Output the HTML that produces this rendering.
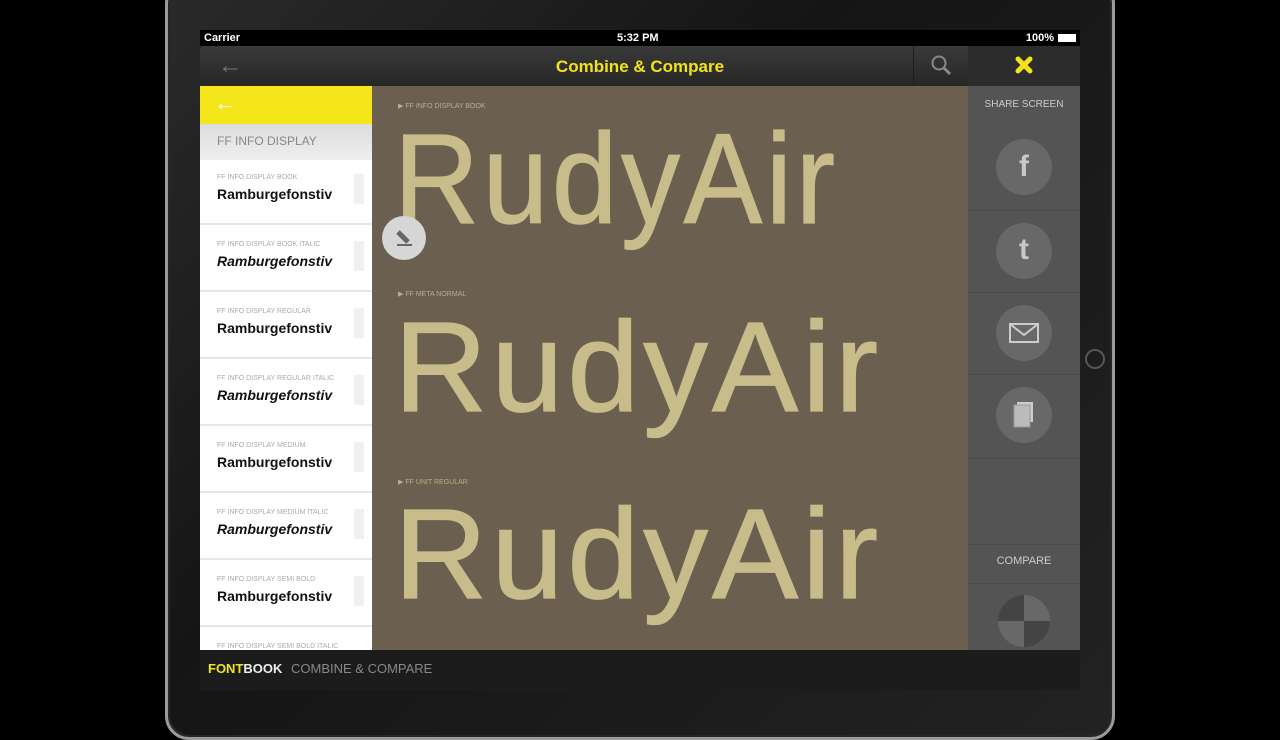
<!DOCTYPE html>
<html><head><meta charset="utf-8"><style>
*{margin:0;padding:0;box-sizing:border-box}
body{width:1280px;height:720px;background:#000;position:relative;overflow:hidden;font-family:"Liberation Sans",sans-serif}
.bezel{position:absolute;left:165px;top:-20px;width:950px;height:760px;background:#262626;border:3px solid #9a9a9a;border-radius:24px}
.inner{position:absolute;left:170px;top:-15px;width:940px;height:750px;background:linear-gradient(135deg,#2a2a2a,#151515 40%,#222);border-radius:20px}
.status{position:absolute;left:200px;top:30px;width:880px;height:16px;background:#000;color:#fff;font-size:11px;font-weight:bold}
.nav{position:absolute;left:200px;top:46px;width:880px;height:40px;background:linear-gradient(#3a3a3a,#262626);border-radius:4px 4px 0 0}
.left{position:absolute;left:200px;top:86px;width:172px;height:564px;background:#fff;overflow:hidden}
.main{position:absolute;left:372px;top:86px;width:596px;height:564px;background:#6b604f;overflow:hidden}
.right{position:absolute;left:968px;top:86px;width:112px;height:564px;background:#545454}
.bottom{position:absolute;left:200px;top:650px;width:880px;height:40px;background:#1c1c1c}
.item{position:absolute;left:0;width:172px;height:65px;border-bottom:2px solid #e6e6e6;background:#fff}
.item .s{position:absolute;left:17px;top:14px;font-size:7px;color:#aaa}
.item .b{position:absolute;left:17px;top:26px;font-size:14px;font-weight:bold;color:#111}
.item .g{position:absolute;right:8px;top:14px;width:10px;height:30px;background:#f0f0f0}
.big{position:absolute;left:22px;color:#c9bc8b;font-size:128px;line-height:1;transform-origin:0 0;-webkit-text-stroke:1.2px #c9bc8b;letter-spacing:4px}
.lab{position:absolute;left:26px;font-size:7px;color:#b8ad8a}
.circ{position:absolute;left:28px;width:56px;height:56px;border-radius:50%;background:#686868;color:#c8c8c8;text-align:center;font-weight:bold}
.sep{position:absolute;left:0;width:112px;height:1px;background:#4a4a4a}
</style></head><body>
<div class="bezel"></div><div class="inner"></div>
<div style="position:absolute;left:1085px;top:349px;width:20px;height:20px;border-radius:50%;border:2px solid #555"></div>
<div class="status"><span style="position:absolute;left:4px;top:2px">Carrier</span><span style="position:absolute;left:417px;top:2px">5:32 PM</span><span style="position:absolute;right:26px;top:2px">100%</span><span style="position:absolute;right:4px;top:4px;width:18px;height:8px;background:#fff"></span></div>
<div class="nav">
<div style="position:absolute;left:18px;top:6px;color:#777;font-size:24px">←</div>
<div style="position:absolute;left:0;width:880px;text-align:center;top:11px;color:#f2e31b;font-size:17px;font-weight:bold">Combine &amp; Compare</div>
<div style="position:absolute;left:713px;top:0;width:1px;height:40px;background:#1e1e1e"></div>
<svg style="position:absolute;left:730px;top:8px" width="22" height="22"><circle cx="9" cy="9" r="6.5" fill="none" stroke="#888" stroke-width="2"/><line x1="14" y1="14" x2="20" y2="20" stroke="#888" stroke-width="3"/></svg>
<div style="position:absolute;left:768px;top:0;width:112px;height:40px;background:#2c2c2c"></div>
<svg style="position:absolute;left:815px;top:10px" width="18" height="18"><path d="M3 3L15 15M15 3L3 15" stroke="#f2e31b" stroke-width="5" stroke-linecap="round"/></svg>
</div>
<div class="left">
<div style="position:absolute;left:0;top:0;width:172px;height:38px;background:#f5e61c"><span style="position:absolute;left:14px;top:4px;color:#fff;font-size:22px">←</span></div>
<div style="position:absolute;left:0;top:38px;width:172px;height:36px;background:linear-gradient(#ddd,#eee);"><span style="position:absolute;left:17px;top:10px;font-size:12px;color:#888">FF INFO DISPLAY</span></div>
<div class="item" style="top:74px"><div class="s">FF INFO DISPLAY BOOK</div><div class="b">Ramburgefonstiv</div><div class="g"></div></div>
<div class="item" style="top:141px"><div class="s">FF INFO DISPLAY BOOK ITALIC</div><div class="b" style="font-style:italic">Ramburgefonstiv</div><div class="g"></div></div>
<div class="item" style="top:208px"><div class="s">FF INFO DISPLAY REGULAR</div><div class="b">Ramburgefonstiv</div><div class="g"></div></div>
<div class="item" style="top:275px"><div class="s">FF INFO DISPLAY REGULAR ITALIC</div><div class="b" style="font-style:italic">Ramburgefonstiv</div><div class="g"></div></div>
<div class="item" style="top:342px"><div class="s">FF INFO DISPLAY MEDIUM</div><div class="b">Ramburgefonstiv</div><div class="g"></div></div>
<div class="item" style="top:409px"><div class="s">FF INFO DISPLAY MEDIUM ITALIC</div><div class="b" style="font-style:italic">Ramburgefonstiv</div><div class="g"></div></div>
<div class="item" style="top:476px"><div class="s">FF INFO DISPLAY SEMI BOLD</div><div class="b">Ramburgefonstiv</div><div class="g"></div></div>
<div class="item" style="top:543px"><div class="s">FF INFO DISPLAY SEMI BOLD ITALIC</div></div>
</div>
<div class="main">
<div class="lab" style="top:16px">▶ FF INFO DISPLAY BOOK</div>
<div class="big" style="top:30px;transform:scaleX(.92)">RudyAir</div>
<div class="lab" style="top:204px">▶ FF META NORMAL</div>
<div class="big" style="top:218px;transform:scaleX(1.01)">RudyAir</div>
<div class="lab" style="top:392px">▶ FF UNIT REGULAR</div>
<div class="big" style="top:405px;transform:scaleX(1.01)">RudyAir</div>
<div style="position:absolute;left:10px;top:130px;width:44px;height:44px;border-radius:50%;background:#d6d6d6"><svg width="44" height="44"><path d="M16 16l10 10" stroke="#666" stroke-width="5"/><line x1="15" y1="29" x2="30" y2="29" stroke="#666" stroke-width="2"/></svg></div>
</div>
<div class="right">
<div style="position:absolute;top:13px;width:112px;text-align:center;color:#ccc;font-size:10px">SHARE SCREEN</div>
<div class="circ" style="top:53px;font-size:30px;line-height:56px">f</div>
<div class="sep" style="top:124px"></div>
<div class="circ" style="top:137px;font-size:30px;line-height:54px">t</div>
<div class="sep" style="top:206px"></div>
<div class="circ" style="top:219px"><svg width="56" height="56"><rect x="14" y="19" width="28" height="18" fill="none" stroke="#ccc" stroke-width="2"/><path d="M14 19l14 11 14-11" fill="none" stroke="#ccc" stroke-width="2"/></svg></div>
<div class="sep" style="top:288px"></div>
<div class="circ" style="top:301px"><svg width="56" height="56"><rect x="21" y="15" width="16" height="20" fill="#ccc"/><rect x="18" y="18" width="16" height="22" fill="#bbb" stroke="#999"/></svg></div>
<div class="sep" style="top:372px"></div>
<div class="sep" style="top:458px"></div>
<div style="position:absolute;top:469px;width:112px;text-align:center;color:#ccc;font-size:11px">COMPARE</div>
<div class="sep" style="top:497px"></div>
<svg style="position:absolute;left:29px;top:508px" width="54" height="54"><circle cx="27" cy="27" r="26" fill="#686868"/><path d="M27 27V1A26 26 0 0 0 1 27Z" fill="#444"/><path d="M27 27V53A26 26 0 0 0 53 27Z" fill="#444"/></svg>
</div>
<div class="bottom"><span style="position:absolute;left:8px;top:11px;font-size:13px;font-weight:bold;color:#f2e31b">FONT<span style="color:#eee">BOOK</span></span><span style="position:absolute;left:91px;top:11px;font-size:13px;color:#888">COMBINE &amp; COMPARE</span></div>
</body></html>
